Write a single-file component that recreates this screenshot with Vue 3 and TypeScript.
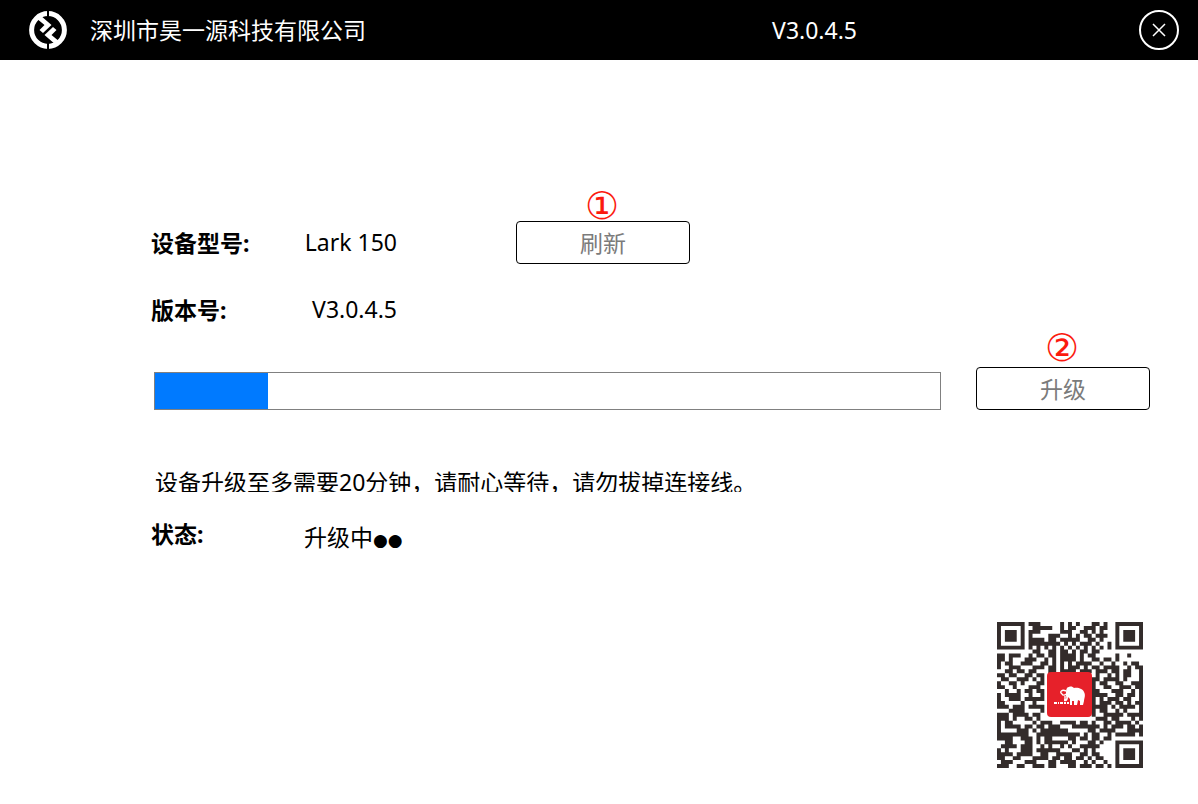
<script setup lang="ts">
import { computed, ref } from 'vue'

const company = '深圳市昊一源科技有限公司'
const toolVersion = 'V3.0.4.5'
const model = 'Lark 150'
const firmware = 'V3.0.4.5'
const progress = ref(14.4)
const status = ref('升级中')
const dots = ref('●●')

const rows: string[] = [
  '1111111011100000101010001101001111111',
  '1000001001111100101100111011001000001',
  '1011101011100000111001101010001011101',
  '1011101010000111001010110111001011101',
  '1011101011110110111110011010001011101',
  '1000001011111111010101110100101000001',
  '1111111010101010101010101010101111111',
  '0000000001100110110101101100000000000',
  '1101110010110110111101011000001001000',
  '1101000111001010111101001101101000000',
  '1011001110011010101011110010010010110',
  '1001110001110110101110101101111001011',
  '0011011011000110111101110111011011001',
  '1101100110110000000000000100101011001',
  '0110011101010000000000001101111010001',
  '1001101000110000000000001011001100111',
  '1100100011100000000000001001100111011',
  '0010010110110000000000001100011100101',
  '1011110010010000000000001111001101101',
  '1001110111110000000000001010111011001',
  '1100001001000000000000001011101101011',
  '1110111011110000000000001111010111101',
  '0001111000010000000000001011001010001',
  '1110111101100000000000001001111101111',
  '1110100110100000000000000111011000101',
  '1011000001011100111101101001101111010',
  '1011110110110111000111111101011101101',
  '1000011101011111110000011011110001111',
  '1111111100111111111110101100101111101',
  '1111001110101100001101101101100000000',
  '0011000110101111110100011010001111111',
  '0111101110010100101001111100001000001',
  '1010001110111111000110101000001011101',
  '1111011110011001111001101100001011101',
  '1100110001111011011011010110001011101',
  '0111000111000110111100101001001000001',
  '1110011001110110001101110110101111111',
]

const qrPath = computed(() =>
  rows
    .flatMap((row, y) => [...row.matchAll(/1+/g)].map((m) => `M${m.index} ${y}h${m[0].length}v1h-${m[0].length}z`))
    .join(''),
)
</script>

<template>
  <div class="window">
    <header class="titlebar">
      <svg class="logo" viewBox="0 0 38 38" aria-hidden="true">
        <circle cx="19" cy="19" r="16.4" fill="none" stroke="#fff" stroke-width="5" />
        <path fill="#000" d="M18 0h2v7h-2zM18 31h2v7h-2z" />
        <path fill="#fff" d="M11 4L22.5 14L14 22L10.5 19L15.5 14L7 7Z" />
        <path fill="#fff" d="M27 34L15.5 24L24 16L27.5 19L22.5 24L31 31Z" />
      </svg>
      <h1 class="company">{{ company }}</h1>
      <span class="tool-version">{{ toolVersion }}</span>
      <button class="close" type="button" aria-label="关闭">
        <svg viewBox="0 0 14 14" aria-hidden="true"><path d="M1 1L13 13M13 1L1 13" /></svg>
      </button>
    </header>

    <main class="content">
      <div class="row">
        <span class="label">设备型号:</span>
        <span class="value">{{ model }}</span>
        <div class="action">
          <span class="step">①</span>
          <button class="btn" type="button">刷新</button>
        </div>
      </div>
      <div class="row version-row">
        <span class="label">版本号:</span>
        <span class="value">{{ firmware }}</span>
      </div>
      <div class="upgrade">
        <div class="bar" role="progressbar" aria-label="升级" :aria-valuenow="progress" aria-valuemin="0" aria-valuemax="100">
          <div class="fill" :style="{ width: progress + '%' }"></div>
        </div>
        <div class="action">
          <span class="step raised">②</span>
          <button class="btn" type="button">升级</button>
        </div>
      </div>
      <p class="note">设备升级至多需要20分钟，请耐心等待，请勿拔掉连接线。</p>
      <div class="row status-row">
        <span class="label">状态:</span>
        <span class="status">{{ status }}<span class="dots">{{ dots }}</span></span>
      </div>
      <svg class="qr" viewBox="0 0 146 146" role="img" aria-label="二维码">
        <path :d="qrPath" transform="scale(3.946)" fill="#332c2b" />
        <rect x="50" y="50" width="45" height="45" rx="4" fill="#e6212a" />
        <path fill="#fff" d="M69 70C69 67 70 65 72 65C74 64 76 65 77 66C81 65 86 67 87 70C89 73 87 77 87 79L86 83H83V79L81 78L80 83H77V79H75V83H73V77L71 75C71 79 69 80 67 79V77C69 78 70 76 69 74Z" />
        <path fill="none" stroke="#fff" stroke-width="1.4" d="M69 69C65 67 62 70 65 72C66 74 68 73 69 72M68 74V79" />
        <path fill="none" stroke="#fff" stroke-width="2" d="M57 81H60M61 81H62M63 81H66M67 81H69M70 81H72" />
      </svg>
    </main>
  </div>
</template>

<style>
body {
  margin: 0;
  background: #fff;
}
</style>

<style scoped>
.window {
  min-height: 100vh;
  font: 23px/32px "Noto Sans", "Noto Sans CJK SC", sans-serif;
  color: #000;
}

.titlebar {
  display: flex;
  align-items: center;
  height: 60px;
  padding: 0 19px 0 29px;
  background: #000;
  color: #fff;
}

.logo {
  width: 38px;
  height: 38px;
  margin-right: 23px;
}

.company {
  margin: 0;
  font: inherit;
}

.tool-version {
  margin-left: auto;
  margin-right: 282px;
}

.close {
  display: grid;
  place-items: center;
  width: 40px;
  height: 40px;
  padding: 0;
  border: 2px solid #fff;
  border-radius: 50%;
  background: transparent;
}

.close svg {
  width: 14px;
  height: 14px;
  fill: none;
  stroke: #fff;
  stroke-width: 1.5;
}

.content {
  display: flex;
  flex-direction: column;
  padding: 161px 48px 36px 151px;
}

.row {
  display: grid;
  grid-template-columns: 153px 93px 174px;
  align-items: center;
}

.row .action {
  margin-left: 119px;
}

.label {
  font-weight: 700;
}

.value {
  padding-bottom: 2px;
  text-align: right;
  white-space: nowrap;
}

.version-row {
  margin-top: 29px;
}

.action {
  position: relative;
  width: 174px;
}

.btn {
  display: block;
  width: 100%;
  height: 43px;
  padding: 0;
  border: 1px solid #000;
  border-radius: 4px;
  background: #fff;
  color: #7b7b7b;
  font: inherit;
}

.step {
  position: absolute;
  left: 0;
  right: 2px;
  bottom: 41px;
  z-index: 1;
  color: #fb1a0e;
  font: 38px/33px "DejaVu Sans", sans-serif;
  text-align: center;
}

.step.raised {
  bottom: 45px;
}

.upgrade {
  display: flex;
  align-items: flex-end;
  gap: 35px;
  margin: 40px 0 0 3px;
}

.bar {
  flex: 1;
  box-sizing: border-box;
  height: 38px;
  border: 1px solid #808080;
}

.fill {
  height: 100%;
  background: #007aff;
}

.note {
  height: 26px;
  margin: 56px 0 0 4px;
  overflow: hidden;
}

.status-row {
  align-items: start;
  margin-top: 26px;
}

.status {
  padding-top: 3px;
  white-space: nowrap;
}

.dots {
  font-family: "DejaVu Sans", sans-serif;
  font-size: 17px;
}

.qr {
  align-self: flex-end;
  width: 146px;
  height: 146px;
  margin: 66px 7px 0 0;
}
</style>
